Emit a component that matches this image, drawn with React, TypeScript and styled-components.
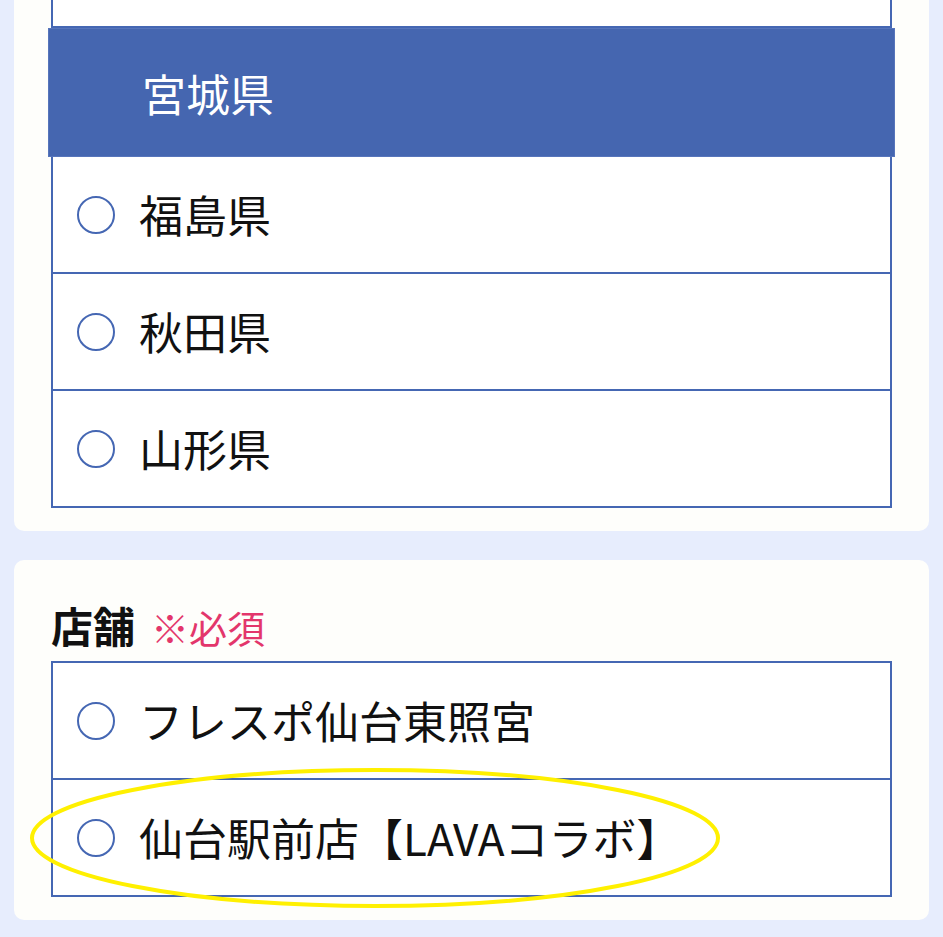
import styled, { createGlobalStyle } from "styled-components";

type Option = { id: string; label: string; selected?: boolean };

const prefectures: Option[] = [
  { id: "iwate", label: "岩手県" },
  { id: "miyagi", label: "宮城県", selected: true },
  { id: "fukushima", label: "福島県" },
  { id: "akita", label: "秋田県" },
  { id: "yamagata", label: "山形県" },
];

const shops: Option[] = [
  { id: "fresupo", label: "フレスポ仙台東照宮" },
  { id: "sendai", label: "仙台駅前店【LAVAコラボ】" },
];

export default function App() {
  return (
    <>
      <GlobalStyle />
      <Page>
        <Card>
          <Heading>
            都道府県<Required>※必須</Required>
          </Heading>
          <OptionList>
            {prefectures.map((p) =>
              p.selected ? (
                <SelectedRow key={p.id}>{p.label}</SelectedRow>
              ) : (
                <OptionRow key={p.id}>
                  <Radio />
                  <Label>{p.label}</Label>
                </OptionRow>
              )
            )}
          </OptionList>
        </Card>

        <Card>
          <Heading>
            店舗<Required>※必須</Required>
          </Heading>
          <OptionList>
            {shops.map((s) => (
              <OptionRow key={s.id}>
                <Radio />
                <Label>{s.label}</Label>
              </OptionRow>
            ))}
          </OptionList>
          <Highlight width="692" height="142" viewBox="0 0 692 142">
            <ellipse
              cx="346"
              cy="71"
              rx="343"
              ry="68"
              fill="none"
              stroke="#fff000"
              strokeWidth="4"
            />
          </Highlight>
        </Card>
      </Page>
    </>
  );
}

const GlobalStyle = createGlobalStyle`
  html, body {
    margin: 0;
    padding: 0;
    background: #e7edfd;
  }
  body {
    font-family: "Noto Sans CJK JP", "Noto Sans", sans-serif;
    color: #111;
    overflow: hidden;
  }
`;

/* the screenshot is scrolled part way down the form */
const Page = styled.div`
  display: flex;
  flex-direction: column;
  gap: 29px;
  padding: 0 14px 17px;
  margin-top: -192px;
`;

const Card = styled.section`
  position: relative;
  background: #fefefb;
  border-radius: 10px;
  padding: 40px 37px 23px;
`;

const Heading = styled.h2`
  margin: 0 0 9px;
  display: flex;
  align-items: baseline;
  gap: 16px;
  font-size: 42px;
  line-height: 50px;
  font-weight: 700;
  color: #111;
`;

const Required = styled.span`
  font-size: 38px;
  font-weight: 400;
  color: #e3366b;
`;

const OptionList = styled.div`
  display: flex;
  flex-direction: column;
  border: 2px solid #4567b3;
  background: #fff;
`;

const OptionRow = styled.label`
  display: flex;
  align-items: center;
  gap: 24px;
  height: 115px;
  padding-left: 24px;
  border-bottom: 2px solid #4567b3;

  &:last-child {
    border-bottom: 0;
  }
`;

const SelectedRow = styled.div`
  display: flex;
  align-items: center;
  height: 129px;
  margin: 0 -5px;
  padding-left: 94px;
  background: #4566b0;
  color: #fff;
  font-size: 44px;
  box-shadow: inset 0 0 0 1px #5775bb;
`;

const Radio = styled.span`
  flex-shrink: 0;
  width: 38px;
  height: 38px;
  box-sizing: border-box;
  border: 2.5px solid #4567b3;
  border-radius: 50%;
  background: #fff;
`;

const Label = styled.span`
  font-size: 44px;
  line-height: 1.2;
  color: #111;
  white-space: nowrap;
`;

const Highlight = styled.svg`
  position: absolute;
  left: 15px;
  top: 207px;
  pointer-events: none;
`;
